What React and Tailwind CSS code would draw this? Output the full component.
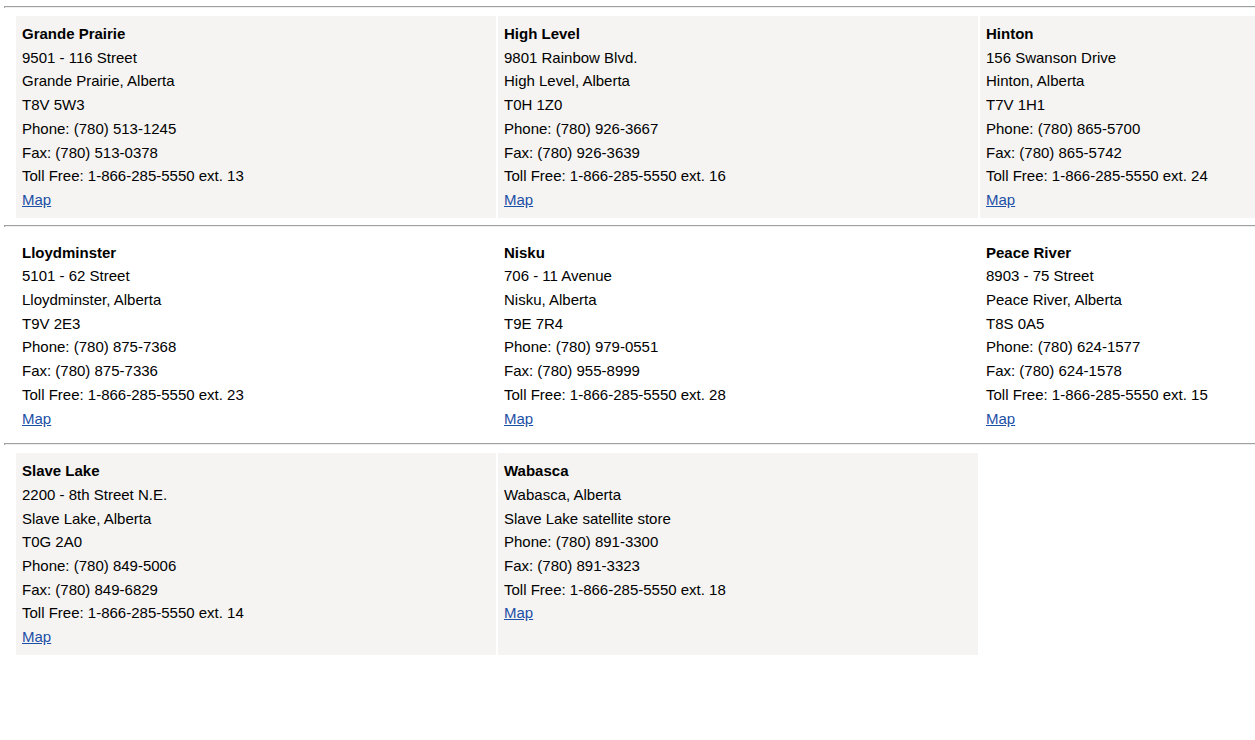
import React from "react";

const rows = [
  {
    shaded: true,
    stores: [
      {
        name: "Grande Prairie",
        lines: ["9501 - 116 Street", "Grande Prairie, Alberta", "T8V 5W3", "Phone: (780) 513-1245", "Fax: (780) 513-0378", "Toll Free: 1-866-285-5550 ext. 13"],
      },
      {
        name: "High Level",
        lines: ["9801 Rainbow Blvd.", "High Level, Alberta", "T0H 1Z0", "Phone: (780) 926-3667", "Fax: (780) 926-3639", "Toll Free: 1-866-285-5550 ext. 16"],
      },
      {
        name: "Hinton",
        lines: ["156 Swanson Drive", "Hinton, Alberta", "T7V 1H1", "Phone: (780) 865-5700", "Fax: (780) 865-5742", "Toll Free: 1-866-285-5550 ext. 24"],
      },
    ],
  },
  {
    shaded: false,
    stores: [
      {
        name: "Lloydminster",
        lines: ["5101 - 62 Street", "Lloydminster, Alberta", "T9V 2E3", "Phone: (780) 875-7368", "Fax: (780) 875-7336", "Toll Free: 1-866-285-5550 ext. 23"],
      },
      {
        name: "Nisku",
        lines: ["706 - 11 Avenue", "Nisku, Alberta", "T9E 7R4", "Phone: (780) 979-0551", "Fax: (780) 955-8999", "Toll Free: 1-866-285-5550 ext. 28"],
      },
      {
        name: "Peace River",
        lines: ["8903 - 75 Street", "Peace River, Alberta", "T8S 0A5", "Phone: (780) 624-1577", "Fax: (780) 624-1578", "Toll Free: 1-866-285-5550 ext. 15"],
      },
    ],
  },
  {
    shaded: true,
    stores: [
      {
        name: "Slave Lake",
        lines: ["2200 - 8th Street N.E.", "Slave Lake, Alberta", "T0G 2A0", "Phone: (780) 849-5006", "Fax: (780) 849-6829", "Toll Free: 1-866-285-5550 ext. 14"],
      },
      {
        name: "Wabasca",
        lines: ["Wabasca, Alberta", "Slave Lake satellite store", "Phone: (780) 891-3300", "Fax: (780) 891-3323", "Toll Free: 1-866-285-5550 ext. 18"],
      },
    ],
  },
];

const Rule = () => (
  <div className="ml-[4px] h-[2px] border-t border-l border-t-[#a0a0a0] border-l-[#a0a0a0] bg-[#eeeeee]" />
);

const Store = ({ store, shaded }) => (
  <div className={`p-[6px] ${shaded ? "bg-[#f5f4f2]" : "bg-white"}`}>
    <div className="font-bold">{store.name}</div>
    {store.lines.map((line) => (
      <div key={line}>{line}</div>
    ))}
    <a href="#" className="text-[#1c4fa6] underline">
      Map
    </a>
  </div>
);

export default function App() {
  return (
    <div className="min-h-[740px] bg-white pt-[6px] text-[15px] leading-[23.7px] text-black" style={{ fontFamily: '"Liberation Sans", Arial, sans-serif' }}>
      {rows.map((row, i) => (
        <div key={i}>
          <Rule />
          <div className="ml-[16px] mt-[8px] mb-[7px] grid grid-cols-[480px_480px_1fr] gap-x-[2px]">
            {row.stores.map((s) => (
              <Store key={s.name} store={s} shaded={row.shaded} />
            ))}
          </div>
        </div>
      ))}
    </div>
  );
}
